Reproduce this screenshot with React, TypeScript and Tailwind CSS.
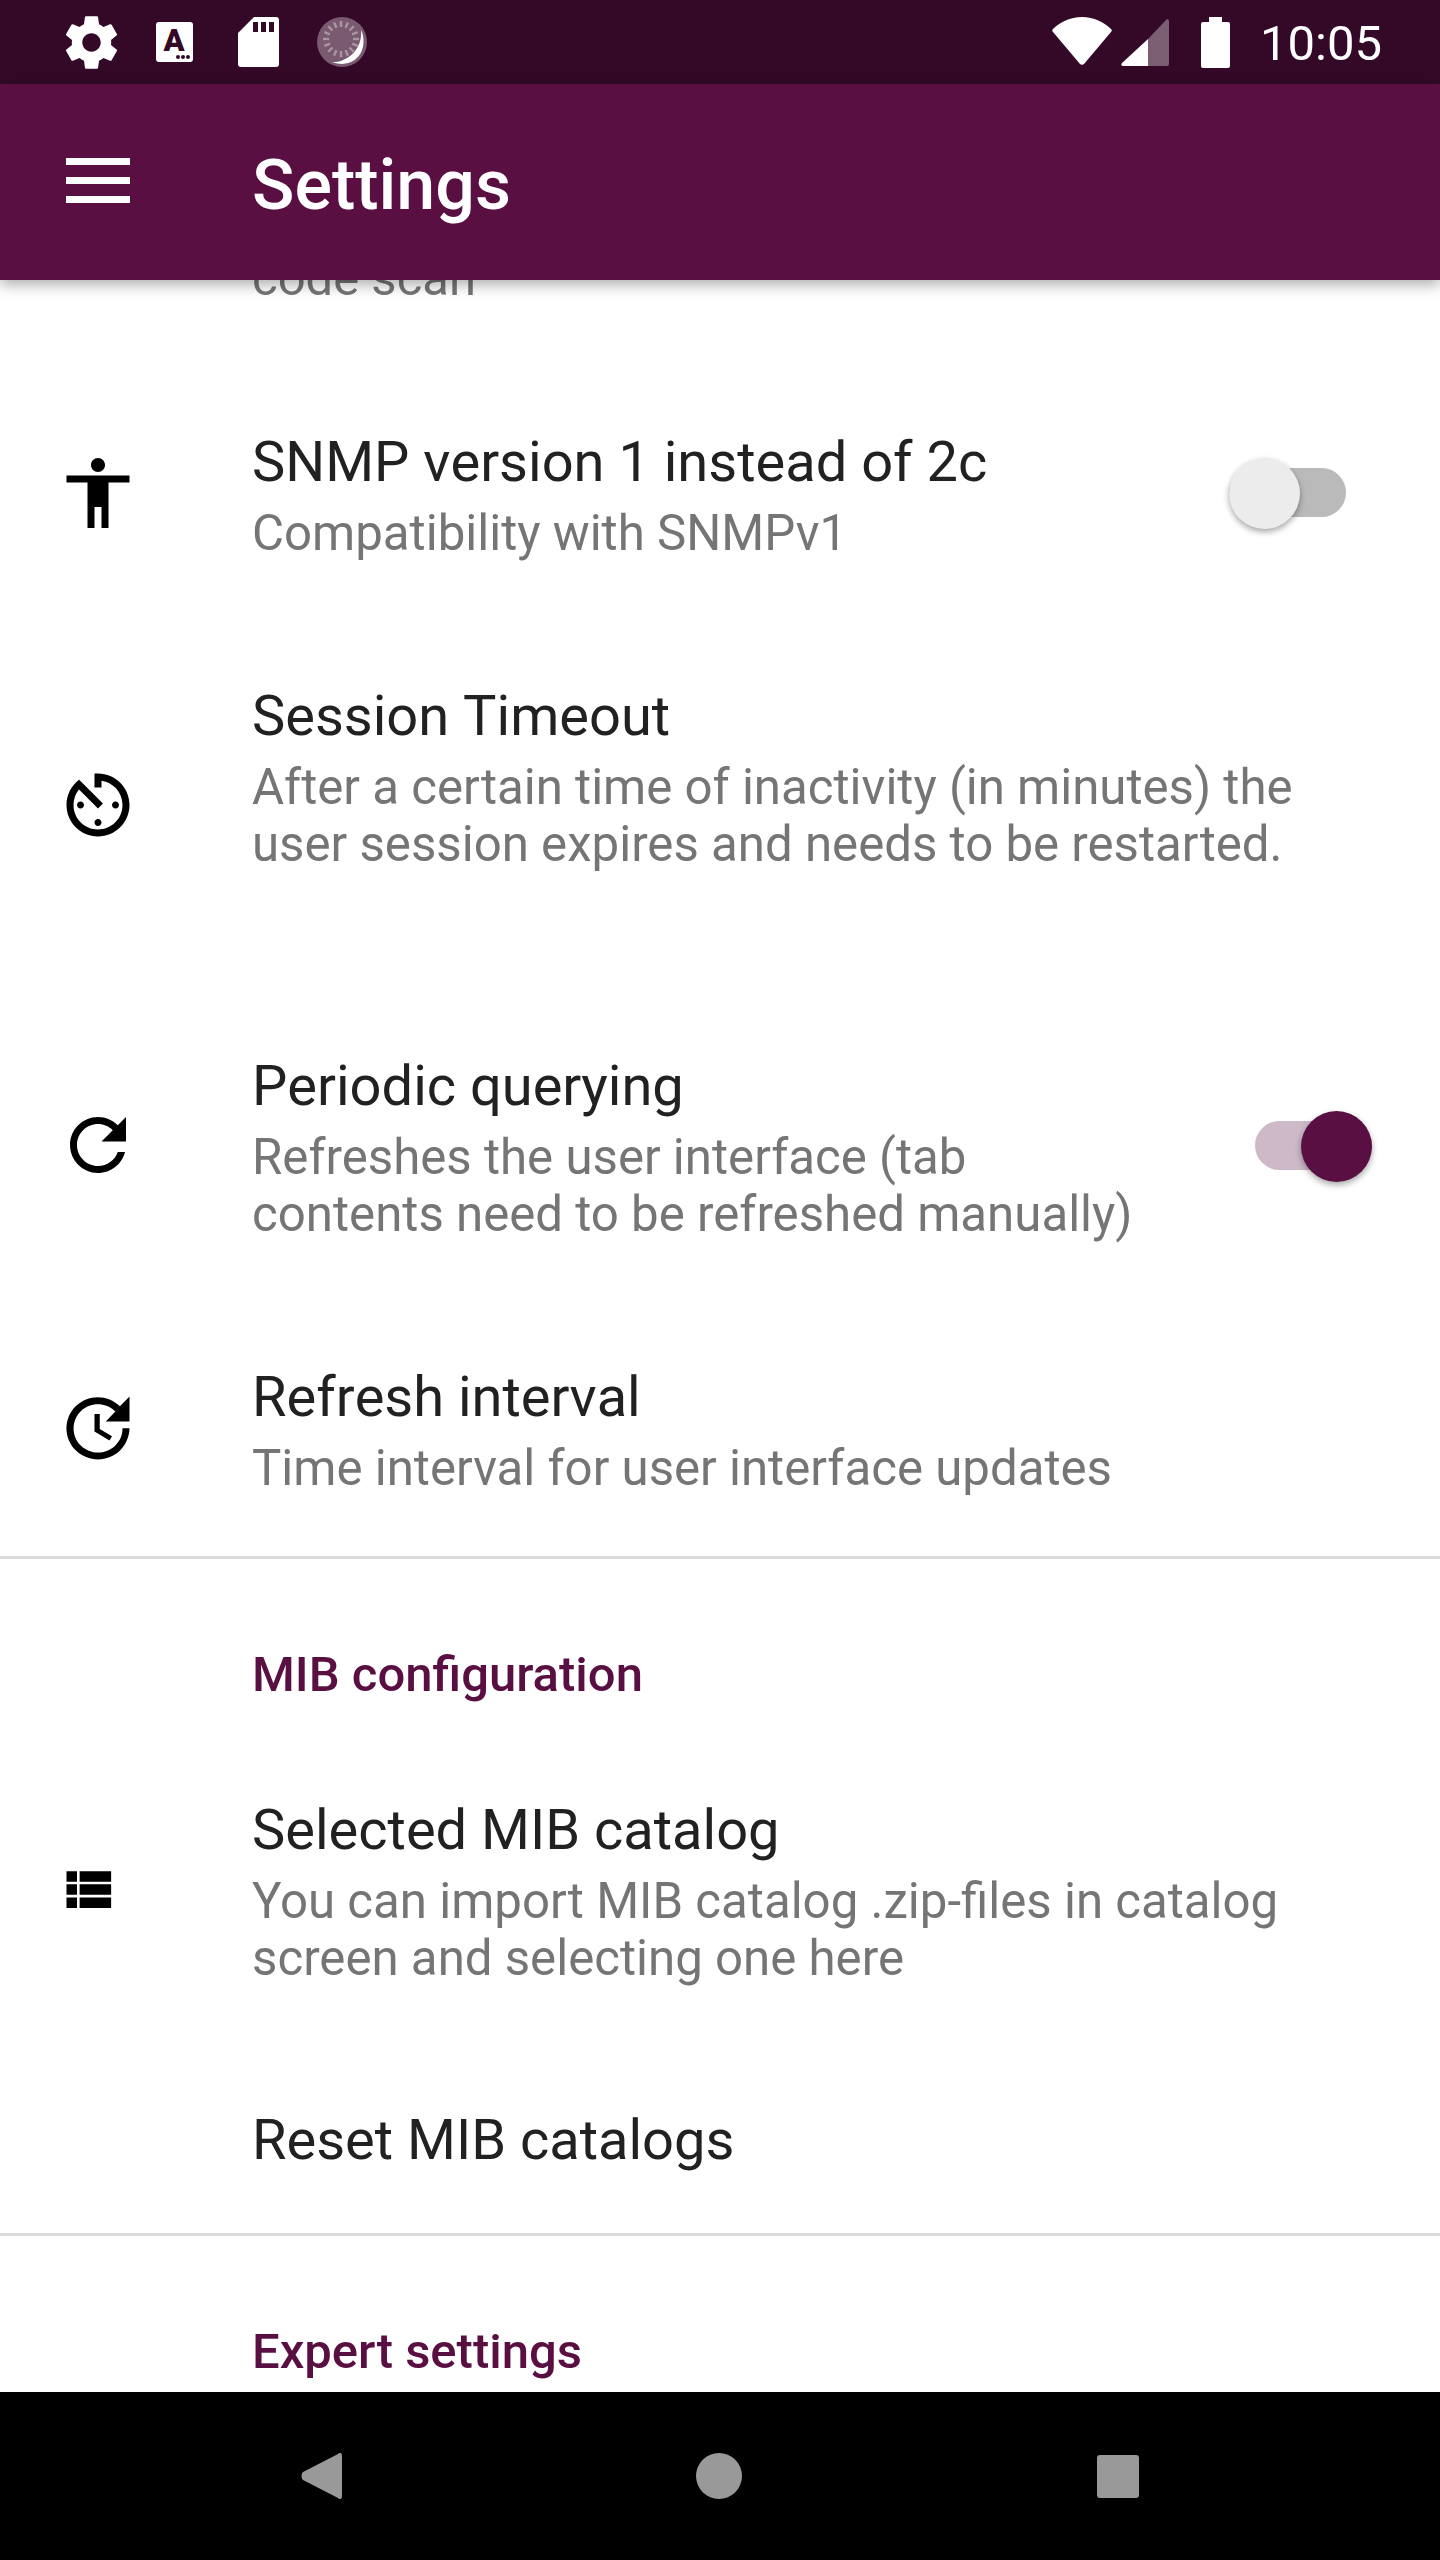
import React from 'react';

const PATHS = {
  gear: 'M19.43 12.98c.04-.32.07-.64.07-.98s-.03-.66-.07-.98l2.11-1.65c.19-.15.24-.42.12-.64l-2-3.46c-.12-.22-.39-.3-.61-.22l-2.49 1c-.52-.4-1.08-.73-1.69-.98l-.38-2.65C14.46 2.18 14.25 2 14 2h-4c-.25 0-.46.18-.49.42l-.38 2.65c-.61.25-1.17.59-1.69.98l-2.49-1c-.23-.09-.49 0-.61.22l-2 3.46c-.13.22-.07.49.12.64l2.11 1.65c-.04.32-.07.65-.07.98s.03.66.07.98l-2.11 1.65c-.19.15-.24.42-.12.64l2 3.46c.12.22.39.3.61.22l2.49-1c.52.4 1.08.73 1.69.98l.38 2.65c.03.24.24.42.49.42h4c.25 0 .46-.18.49-.42l.38-2.65c.61-.25 1.17-.59 1.69-.98l2.49 1c.23.09.49 0 .61-.22l2-3.46c.12-.22.07-.49-.12-.64l-2.11-1.65zM12 15.5c-1.93 0-3.5-1.57-3.5-3.5s1.57-3.5 3.5-3.5 3.5 1.57 3.5 3.5-1.57 3.5-3.5 3.5z',
  person: 'M12 2c1.1 0 2 .9 2 2s-.9 2-2 2-2-.9-2-2 .9-2 2-2zm9 7h-6v13h-2v-6h-2v6H9V9H3V7h18v2z',
  timer: 'M11 17c0 .55.45 1 1 1s1-.45 1-1-.45-1-1-1-1 .45-1 1zm0-14v4h2V5.08c3.39.49 6 3.39 6 6.92 0 3.87-3.13 7-7 7s-7-3.13-7-7c0-1.68.59-3.22 1.58-4.42L12 13l1.41-1.41-6.8-6.8v.02C4.42 6.45 3 9.05 3 12c0 4.97 4.02 9 9 9 4.97 0 9-4.03 9-9s-4.03-9-9-9h-1zm7 9c0-.55-.45-1-1-1s-1 .45-1 1 .45 1 1 1 1-.45 1-1zM6 12c0 .55.45 1 1 1s1-.45 1-1-.45-1-1-1-1 .45-1 1z',
  refresh: 'M17.65 6.35C16.2 4.9 14.21 4 12 4c-4.42 0-7.99 3.58-7.99 8s3.57 8 7.99 8c3.73 0 6.84-2.55 7.73-6h-2.08c-.82 2.33-3.04 4-5.65 4-3.31 0-6-2.69-6-6s2.69-6 6-6c1.66 0 3.14.69 4.22 1.78L13 11h7V4l-2.35 2.35z',
  update: 'M21 10.12h-6.78l2.74-2.82c-2.73-2.7-7.15-2.8-9.88-.1-2.73 2.71-2.73 7.08 0 9.79s7.15 2.71 9.88 0C18.32 15.65 19 14.08 19 12.1h2c0 1.98-.88 4.55-2.64 6.29-3.51 3.48-9.21 3.48-12.72 0-3.5-3.47-3.53-9.11-.02-12.58s9.14-3.47 12.65 0L21 3v7.12zM12.5 8v4.25l3.5 2.08-.72 1.21L11 13V8h1.5z',
  list: 'M4 14h4v-4H4v4zm0 5h4v-4H4v4zM4 9h4V5H4v4zm5 5h12v-4H9v4zm0 5h12v-4H9v4zM9 5v4h12V5H9z',
};

function Icon({ d, className }: { d: string; className?: string }) {
  return (
    <svg viewBox="0 0 24 24" className={className} fill="currentColor">
      <path d={d} />
    </svg>
  );
}

function StatusBar() {
  return (
    <div className="h-[84px] bg-[#330927] flex items-center text-white shrink-0">
      <Icon d={PATHS.gear} className="w-[63px] h-[63px] ml-[60px]" />
      {/* keyboard indicator */}
      <svg viewBox="0 0 37 40" className="w-[37px] h-[40px] ml-[33px]">
        <rect width="37" height="40" rx="3" fill="#fff" />
        <text x="18" y="29" textAnchor="middle" fontSize="31" fontWeight="900" fontFamily="Roboto, sans-serif" fill="#330927">A</text>
        <circle cx="22" cy="35" r="2" fill="#330927" />
        <circle cx="27" cy="35" r="2" fill="#330927" />
        <circle cx="32" cy="35" r="2" fill="#330927" />
      </svg>
      {/* sd card */}
      <svg viewBox="0 0 41 50" className="w-[41px] h-[50px] ml-[45px]">
        <path d="M16 0h22a3 3 0 0 1 3 3v44a3 3 0 0 1-3 3H3a3 3 0 0 1-3-3V16z" fill="#fff" />
        <path d="M15 5h5v10h-5zM23 5h5v10h-5zM31 5h5v10h-5z" fill="#330927" />
      </svg>
      {/* spinner */}
      <svg viewBox="0 0 50 50" className="w-[50px] h-[50px] ml-[38px]">
        <circle cx="25" cy="25" r="25" fill="#7a5a70" />
        <path d="M44 13C50 25 46 46 25 47c-3 0-7-1-10-2 15 1 31-13 29-32z" fill="#fff" />
        {Array.from({ length: 16 }).map((_, i) => (
          <rect key={i} x="22.8" y="4" width="2.4" height="6" fill="#a996a3" transform={`rotate(${i * 22.5} 24 22)`} />
        ))}
      </svg>

      <div className="ml-auto flex items-center">
        <svg viewBox="0 0 60 48" className="w-[60px] h-[48px] mb-[2px]">
          <path d="M1 12C8 5 18 0 30 0s22 5 29 12c1 1 1 2 0 3L32 47c-1 1-3 1-4 0L1 15c-1-1-1-2 0-3z" fill="#fff" />
        </svg>
        <svg viewBox="0 0 48 47" className="w-[48px] h-[47px] ml-[9px]">
          <path d="M46 0c1 0 2 1 2 2v43c0 1-1 2-2 2H27V20z" fill="#fff" fillOpacity="0.35" />
          <path d="M27 20v27H2c-2 0-2-2-1-3z" fill="#fff" />
        </svg>
        <svg viewBox="0 0 29 51" className="w-[29px] h-[51px] ml-[32px]">
          <path d="M8 0h13v5h6a2 2 0 0 1 2 2v42a2 2 0 0 1-2 2H2a2 2 0 0 1-2-2V7a2 2 0 0 1 2-2h6z" fill="#fff" />
        </svg>
        <span className="ml-[30px] mr-[58px] mt-[2px] text-[49px] leading-[57px]">10:05</span>
      </div>
    </div>
  );
}

function Toolbar() {
  return (
    <div className="relative z-10 h-[196px] bg-[#5a0f43] flex items-center shrink-0 shadow-[0_4px_14px_rgba(0,0,0,0.35)]">
      <div className="ml-[66px] mb-[4px] w-[64px] flex flex-col gap-[12px]">
        <div className="h-[7px] bg-white" />
        <div className="h-[7px] bg-white" />
        <div className="h-[7px] bg-white" />
      </div>
      <h1 className="ml-[122px] mt-[6px] text-white text-[70px] leading-[82px] font-medium">Settings</h1>
    </div>
  );
}

function Switch({ on, className }: { on?: boolean; className?: string }) {
  return (
    <div className={`relative w-[117px] h-[49px] mb-[6px] rounded-full shrink-0 ${on ? 'bg-[#cdb9c8]' : 'bg-[#bababa]'} ${className ?? ''}`}>
      <div
        className={`absolute top-[-10px] w-[71px] h-[71px] rounded-full shadow-[0_3px_6px_rgba(0,0,0,0.35)] ${
          on ? 'right-0 bg-[#5a0f43]' : 'left-0 bg-[#ececec]'
        }`}
      />
    </div>
  );
}

interface RowProps {
  icon?: React.ReactNode;
  title: string;
  summary?: React.ReactNode;
  trailing?: React.ReactNode;
  className?: string;
  textClassName?: string;
}

function Row({ icon, title, summary, trailing, className, textClassName }: RowProps) {
  return (
    <div className={`flex items-center ${className ?? 'py-[60px]'}`}>
      <div className="w-[252px] pl-[56px] shrink-0 mb-[6px]">{icon}</div>
      <div className={`flex-1 ${textClassName ?? ''}`}>
        <div className="text-[56px] leading-[66px] text-[#212121] [font-kerning:none]">{title}</div>
        {summary && <div className="mt-[10px] text-[49.2px] leading-[57px] text-[#757575]">{summary}</div>}
      </div>
      {trailing}
    </div>
  );
}

function Category({ title }: { title: string }) {
  return (
    <div className="pl-[252px] pt-[87px] pb-[34px] text-[49px] leading-[57px] font-medium text-[#5a0f43]">{title}</div>
  );
}

function NavBar() {
  return (
    <div className="h-[168px] bg-black flex items-center shrink-0">
      <svg viewBox="0 0 41 46" className="w-[41px] h-[46px] ml-[301px]">
        <path d="M37 1c2-2 4-1 4 2v40c0 3-2 4-4 2L2 27c-2-2-2-6 0-8z" fill="#999" />
      </svg>
      <div className="w-[46px] h-[46px] rounded-full bg-[#999] ml-[354px]" />
      <div className="w-[42px] h-[43px] rounded-[3px] bg-[#999] ml-[355px]" />
    </div>
  );
}

export default function App() {
  return (
    <div className="w-[1440px] h-[2560px] flex flex-col bg-white font-['Roboto',sans-serif] overflow-hidden">
      <StatusBar />
      <Toolbar />
      <div className="flex-1 min-h-0 overflow-hidden">
        <div className="mt-[-30px] pb-[122px] pl-[252px] text-[49px] leading-[57px] text-[#757575]">code scan</div>
        <Row
          icon={<Icon d={PATHS.person} className="w-[84px] h-[84px] text-black" />}
          title="SNMP version 1 instead of 2c"
          summary="Compatibility with SNMPv1"
          trailing={<Switch className="mr-[94px]" />}
          className="pb-[60px]"
        />
        <Row
          icon={<Icon d={PATHS.timer} className="w-[84px] h-[84px] text-black" />}
          title="Session Timeout"
          summary={<>After a certain time of inactivity (in minutes) the<br />user session expires and needs to be restarted.</>}
          className="pt-[61px] pb-[60px]"
          textClassName="pb-[60px]"
        />
        <Row
          icon={<Icon d={PATHS.refresh} className="w-[84px] h-[84px] text-black" />}
          title="Periodic querying"
          summary={<>Refreshes the user interface (tab<br />contents need to be refreshed manually)</>}
          trailing={<Switch on className="mr-[68px]" />}
          className="pt-[60px] pb-[61px]"
        />
        <Row
          icon={<Icon d={PATHS.update} className="w-[84px] h-[84px] text-black" />}
          title="Refresh interval"
          summary="Time interval for user interface updates"
          className="pt-[60px] pb-[59px]"
        />
        <div className="h-[3px] bg-[#dcdcdc]" />
        <Category title="MIB configuration" />
        <Row
          icon={<Icon d={PATHS.list} className="w-[63px] h-[63px] text-black" />}
          title="Selected MIB catalog"
          summary={<>You can import MIB catalog .zip-files in catalog<br />screen and selecting one here</>}
        />
        <Row title="Reset MIB catalogs" />
        <div className="h-[3px] bg-[#dcdcdc]" />
        <Category title="Expert settings" />
      </div>
      <NavBar />
    </div>
  );
}
